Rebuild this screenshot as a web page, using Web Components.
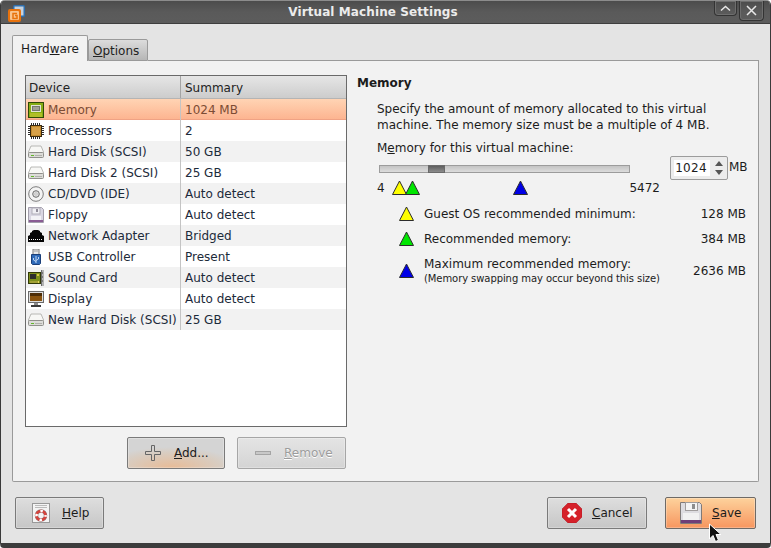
<!DOCTYPE html>
<html>
<head>
<meta charset="utf-8">
<title>Virtual Machine Settings</title>
<style>
	html, body { margin: 0; padding: 0; background: #fff; }
	body { font: 12px/16px "DejaVu Sans", sans-serif; color: #1c1c1c; overflow: hidden; }
</style>
</head>
<body>
<vm-window>
	<vm-titlebar slot="title">Virtual Machine Settings</vm-titlebar>
	<vm-tabs>
		<span slot="active">Hard<u>w</u>are</span>
		<span slot="other"><u>O</u>ptions</span>
		<div style="display:flex;gap:10px">
			<div style="width:322px;flex:none">
				<device-list>
					<device-row icon="memory" summary="1024 MB" selected>Memory</device-row>
					<device-row icon="cpu" summary="2">Processors</device-row>
					<device-row icon="disk" summary="50 GB">Hard Disk (SCSI)</device-row>
					<device-row icon="disk" summary="25 GB">Hard Disk 2 (SCSI)</device-row>
					<device-row icon="cd" summary="Auto detect">CD/DVD (IDE)</device-row>
					<device-row icon="floppy" summary="Auto detect">Floppy</device-row>
					<device-row icon="net" summary="Bridged">Network Adapter</device-row>
					<device-row icon="usb" summary="Present">USB Controller</device-row>
					<device-row icon="sound" summary="Auto detect">Sound Card</device-row>
					<device-row icon="display" summary="Auto detect">Display</device-row>
					<device-row icon="disk" summary="25 GB">New Hard Disk (SCSI)</device-row>
				</device-list>
				<div style="display:flex;justify-content:flex-end;gap:12px;margin:10px 1px 0 0">
					<vm-button kind="hover" style="width:98px;--pad:17px;--gap:13px"><vm-icon slot="icon" name="plus"></vm-icon><u>A</u>dd...</vm-button>
					<vm-button kind="disabled" style="width:109px;--pad:17px;--gap:13px"><vm-icon slot="icon" name="minus"></vm-icon><u>R</u>emove</vm-button>
				</div>
			</div>
			<memory-panel></memory-panel>
		</div>
	</vm-tabs>
	<div slot="actions" style="display:flex;align-items:center">
		<vm-button style="width:89px;--pad:16px;--gap:12px"><vm-icon slot="icon" name="help"></vm-icon><u>H</u>elp</vm-button>
		<vm-button style="width:100px;--pad:14px;--gap:10px;margin-left:auto"><vm-icon slot="icon" name="cancel"></vm-icon><u>C</u>ancel</vm-button>
		<vm-button kind="default" style="width:91px;--pad:14px;--gap:10px;margin:0 3px 0 18px"><vm-icon slot="icon" name="save"></vm-icon><u>S</u>ave</vm-button>
	</div>
	<mouse-pointer slot="overlay"></mouse-pointer>
</vm-window>

<script>
const ICONS = {
	memory: `<rect x="0" y="0" width="16" height="16" fill="#2f4a06"/><rect x="1" y="1" width="14" height="14" fill="#87ad14"/><rect x="3" y="3" width="10" height="7" fill="#e4e4d8"/><rect x="4" y="4" width="8" height="5" fill="#77776e"/><rect x="5" y="5" width="6" height="3" fill="#a2a296"/><path d="M2 11h12v4H2z" fill="#d9cf3a"/><path d="M3 11v4M5 11v4M7 11v4M9 11v4M11 11v4M13 11v4" stroke="#87ad14"/>`,
	cpu: `<path d="M0 3.500h16M0 5.500h16M0 7.500h16M0 9.500h16M0 11.500h16M3.500 0v16M5.500 0v16M7.500 0v16M9.500 0v16M11.500 0v16" stroke="#2c2c2c"/><rect x="2" y="2" width="12" height="12" fill="#3a2a10"/><rect x="3" y="3" width="10" height="10" fill="#c28a2e"/><rect x="4" y="4" width="8" height="8" fill="#d8a148"/>`,
	disk: `<path d="M3 2h10l3 7H0z" fill="#f7f7f5" stroke="#a8a8a4" stroke-width=".8"/><rect x=".5" y="8.500" width="15" height="5" rx="1" fill="#dcdcd8" stroke="#90908c"/><rect x="3" y="11" width="3" height="1" fill="#62b82a"/><rect x="7" y="11" width="7" height="1" fill="#b0b0ac"/>`,
	cd: `<circle cx="8" cy="8" r="7.300" fill="#f4f4f4" stroke="#7c7c7c"/><circle cx="8" cy="8" r="3.300" fill="#e2e2e2" stroke="#6c6c6c"/><circle cx="8" cy="8" r="1.200" fill="#fff" stroke="#999" stroke-width=".6"/>`,
	floppy: `<path d="M.5 .5h13l2 2v13H.5z" fill="#d9d6e2" stroke="#a39fac"/><rect x="4" y="1" width="8" height="6" fill="#f0eff4" stroke="#b0adb8"/><rect x="8" y="2" width="2" height="3" fill="#918d9a"/><rect x="3" y="9" width="10" height="4" fill="#f3f2f6"/><rect x="1" y="13" width="14" height="2" fill="#8a5c94"/>`,
	net: `<path d="M0 14V8l2-1V5l2-1V3l2-1h4l2 1v1l2 1v2l2 1v6z" fill="#050505"/><path d="M1 11.500h14" stroke="#fff" stroke-dasharray="1 1"/>`,
	usb: `<rect x="5" y="0" width="6" height="6" fill="#e8e8e8" stroke="#7c7c7c"/><path d="M6.500 2h1M8.500 2h1" stroke="#555"/><path d="M3.500 5.500h9v9l-1 1h-7l-1-1z" fill="#2f6ab8" stroke="#1b3f78"/><path d="M8 7v7M5.500 9v2l2.500 1.500M10.500 8v2l-2.500 1.500" stroke="#bcd4f2" fill="none"/>`,
	sound: `<rect x="0" y="2" width="13" height="12" fill="#333a08"/><rect x="1" y="3" width="11" height="10" fill="#7d8f1c"/><rect x="2" y="4" width="6" height="5" fill="#2c2c2c"/><rect x="9" y="4" width="2" height="2" fill="#d9c64a"/><path d="M2 11h9v2H2z" fill="#e6d65a"/><path d="M3 11v2M5 11v2M7 11v2M9 11v2" stroke="#5e6c10"/><rect x="13" y="0" width="3" height="16" fill="#b4b4b4"/><path d="M14 3h1M14 7h1M14 11h1" stroke="#3c3c3c"/><path d="M13.500 0v16" stroke="#6c6c6c"/>`,
	display: `<rect x=".5" y=".5" width="15" height="11" fill="#dedede" stroke="#6a6a6a"/><rect x="2" y="2" width="12" height="8" fill="#8a5410"/><rect x="2" y="2" width="12" height="3" fill="#4e2e08"/><rect x="6" y="12" width="4" height="2" fill="#8c8c8c"/><rect x="3" y="14" width="10" height="2" fill="#3c3c3c"/>`,
	plus: `<path d="M6.500 .5h3v6h6v3h-6v6h-3v-6h-6v-3h6z" fill="none" stroke="#666"/>`,
	minus: `<rect x=".5" y="6.500" width="15" height="3" fill="#c8c8c8" stroke="#777" stroke-dasharray="1 1"/>`
};
const WIDE_ICONS = {
	help: `<svg viewBox="0 0 18 20" width="18" height="20"><rect x=".5" y=".5" width="17" height="19" fill="#f4f4f4" stroke="#999"/><path d="M3 2.500h12M3 4.500h12" stroke="#bbb"/><circle cx="9" cy="12.500" r="4.500" fill="none" stroke="#8c6f6f" stroke-width="3.400"/><circle cx="9" cy="12.500" r="4.500" fill="none" stroke="#d8433c" stroke-width="2.600"/><circle cx="9" cy="12.500" r="4.500" fill="none" stroke="#fff" stroke-width="2.600" stroke-dasharray="2.500 4.570" stroke-dashoffset="1.200"/></svg>`,
	cancel: `<svg viewBox="0 0 20 20" width="20" height="20"><path d="M6 0h8l6 6v8l-6 6H6l-6-6V6z" fill="#d5212a" stroke="#a31820" stroke-width=".5"/><path d="M6 6l8 8M14 6l-8 8" stroke="#fff" stroke-width="3"/></svg>`,
	save: `<svg viewBox="0 0 22 22" width="22" height="22"><path d="M.5 .5h19l2 2v19H.5z" fill="#dddce0" stroke="#807a78"/><rect x="5.500" y=".5" width="12" height="8" fill="#f4f4f4" stroke="#a09c9c"/><rect x="12" y="2" width="3" height="5" fill="#8d8d8d"/><rect x="3" y="11" width="16" height="7" fill="#f1f1f1"/><rect x="1" y="18" width="20" height="3" fill="#6f3f78"/></svg>`
};

// small icons share one 16x16 viewBox, the bigger ones carry their own
class VmIcon extends HTMLElement {
	connectedCallback() {
		const name = this.getAttribute("name");
		const svg = WIDE_ICONS[name] || `<svg viewBox="0 0 16 16" width="16" height="16">${ICONS[name]}</svg>`;
		this.attachShadow({ mode: "open" }).innerHTML = `
			<style>:host { display: block; line-height: 0; } svg { display: block; }</style>${svg}`;
	}
}

class VmWindow extends HTMLElement {
	constructor() {
		super();
		this.attachShadow({ mode: "open" }).innerHTML = `
			<style>
				:host {
					display: flex;
					flex-direction: column;
					position: relative;
					box-sizing: border-box;
					width: 771px;
					height: 548px;
					background: #e4e4e4;
					border-left: 1px solid #3a3a3a;
					border-right: 1px solid #3a3a3a;
					border-bottom: 5px solid #3c3c3c;
					border-radius: 5px 5px 4px 4px;
					overflow: hidden;
				}
				.body { padding: 11px 11px 14px 11px; }
				.actions { margin: 15px 0 0 3px; }
			</style>
			<slot name="title"></slot>
			<div class="body">
				<slot></slot>
				<div class="actions"><slot name="actions"></slot></div>
			</div>
			<slot name="overlay"></slot>
		`;
	}
}

class VmTitlebar extends HTMLElement {
	constructor() {
		super();
		this.attachShadow({ mode: "open" }).innerHTML = `
			<style>
				:host {
					display: flex;
					box-sizing: border-box;
					height: 25px;
					background: linear-gradient(#4c4c4c, #5a5a5a 50%, #5c5c5c);
					border-top: 1px solid #8c8c8c;
					border-bottom: 1px solid #3e3e3e;
					color: #ececec;
					font: bold 12px/22px "DejaVu Sans", sans-serif;
					letter-spacing: .1px;
				}
				.logo { margin: 4px 0 0 7px; width: 17px; height: 17px; }
				.name { flex: 1; text-align: center; padding-left: 7px; }
				.btn {
					box-sizing: border-box;
					border: 1px solid #333;
					border-top: 0;
					border-radius: 0 0 4px 4px;
					box-shadow: inset 0 0 0 1px #6e6e6e;
					display: flex;
					align-items: center;
					justify-content: center;
				}
				.up { width: 23px; height: 15px; }
				.close { width: 25px; height: 20px; margin: 0 6px 0 2px; }
			</style>
			<svg class="logo" viewBox="0 0 17 17">
				<rect x="5" y="0" width="12" height="12" rx="1.500" fill="#2f6fae"/>
				<rect x="6.500" y="1.500" width="9" height="9" fill="#c6d2de"/>
				<rect x="0" y="4" width="13" height="13" rx="2" fill="#e8720c"/>
				<rect x="2" y="6" width="9" height="9" rx="1" fill="#f9c48e"/>
				<path d="M9 8.500H5v5h4v-3H7" fill="none" stroke="#e8720c" stroke-width="1.500"/>
			</svg>
			<div class="name"><slot></slot></div>
			<div class="btn up"><svg width="11" height="7" viewBox="0 0 11 7"><path d="M1 5.500l4.500-4 4.500 4" fill="none" stroke="#e8e8e8" stroke-width="1.500"/></svg></div>
			<div class="btn close"><svg width="11" height="11" viewBox="0 0 11 11"><path d="M1 1l9 9M10 1l-9 9" stroke="#e8e8e8" stroke-width="1.500"/></svg></div>
		`;
	}
}

class VmTabs extends HTMLElement {
	constructor() {
		super();
		this.attachShadow({ mode: "open" }).innerHTML = `
			<style>
				:host { display: block; }
				.strip { display: flex; align-items: flex-end; height: 26px; }
				.tab { box-sizing: border-box; border: 1px solid #9a9a9a; border-radius: 2px 2px 0 0; text-align: center; }
				.on { width: 76px; height: 26px; background: #f2f2f2; border-bottom: 0; line-height: 26px; }
				.off { width: 60px; height: 22px; background: linear-gradient(#dcdcdc, #b6b6b6); line-height: 23px; color: #222; text-align: left; padding-left: 4px; }
				.rest { flex: 1; border-bottom: 1px solid #9a9a9a; }
				.panel {
					background: #f2f2f2;
					border: 1px solid #9a9a9a;
					border-top: 0;
					border-radius: 0 0 2px 2px;
					padding: 14px 12px 12px 12px;
				}
			</style>
			<div class="strip">
				<div class="tab on"><slot name="active"></slot></div>
				<div class="tab off"><slot name="other"></slot></div>
				<div class="rest"></div>
			</div>
			<div class="panel"><slot></slot></div>
		`;
	}
}

class DeviceList extends HTMLElement {
	constructor() {
		super();
		this.attachShadow({ mode: "open" }).innerHTML = `
			<style>
				:host { display: block; box-sizing: border-box; height: 352px; background: #fff; border: 1px solid #6a6a6a; }
				.head { display: flex; height: 22px; line-height: 25px; background: linear-gradient(#e6e6e6, #cccccc); border-bottom: 1px solid #b4b4b4; color: #222; }
				.head div { box-sizing: border-box; }
				.dev { width: 155px; padding-left: 3px; border-right: 1px solid #a4a4a4; }
				.sum { padding-left: 4px; }
			</style>
			<div class="head"><div class="dev">Device</div><div class="sum">Summary</div></div>
			<slot></slot>
		`;
	}
}

class DeviceRow extends HTMLElement {
	connectedCallback() {
		const icon = this.getAttribute("icon");
		const summary = this.getAttribute("summary");
		this.attachShadow({ mode: "open" }).innerHTML = `
			<style>
				:host { display: flex; height: 21px; line-height: 21px; background: #fff; color: #1c2a3a; }
				:host(:nth-child(odd)) { background: #f2f2f2; }
				:host([selected]) {
					background: linear-gradient(#ffd4b4, #fdb38f);
					color: #7c4c34;
					box-shadow: inset 0 -1px 0 #f0a284;
				}
				.dev { box-sizing: border-box; width: 155px; display: flex; align-items: center; gap: 4px; padding-left: 2px; border-right: 1px solid #c4c4c4; white-space: nowrap; }
				.label { padding-top: 2px; }
				.sum { padding: 1px 0 0 4px; }
			</style>
			<div class="dev"><vm-icon name="${icon}"></vm-icon><div class="label"><slot></slot></div></div>
			<div class="sum">${summary}</div>
		`;
	}
}

class VmButton extends HTMLElement {
	constructor() {
		super();
		this.attachShadow({ mode: "open" }).innerHTML = `
			<style>
				:host {
					display: flex;
					align-items: center;
					gap: var(--gap, 8px);
					box-sizing: border-box;
					height: 32px;
					padding-left: var(--pad, 12px);
					border: 1px solid #7a7a7a;
					border-radius: 2px;
					background: linear-gradient(#dedede, #c6c6c6);
					box-shadow: inset 0 0 0 1px rgba(255,255,255,.25);
					color: #1c1c1c;
				}
				:host([kind="hover"]) { background: radial-gradient(ellipse 70% 70% at 45% 100%, #e8bb96, #d8cdc2 75%, #d4d4d4); }
				:host([kind="disabled"]) {
					background: linear-gradient(#e4e4e4, #d4d4d4);
					border-color: #a6a6a6;
					color: #9c9c9c;
					text-shadow: 0 1px 0 #fff;
				}
				:host([kind="default"]) { background: linear-gradient(#fdd29c, #f7965f); border-color: #6e6a66; }
			</style>
			<slot name="icon"></slot>
			<span><slot></slot></span>
		`;
	}
}

class MemoryPanel extends HTMLElement {
	constructor() {
		super();
		const tri = (fill, ml = 0) => `<svg style="margin-left:${ml}px;display:block;flex:none" width="15" height="15" viewBox="0 0 15 15"><path d="M7.500 1L14.500 14.500H.5z" fill="${fill}" stroke="#2c2c2c"/></svg>`;
		this.attachShadow({ mode: "open" }).innerHTML = `
			<style>
				:host { display: block; flex: 1; }
				h3 { margin: 0 0 10px; font-size: 12px; line-height: 16px; font-weight: bold; }
				.body { margin-left: 20px; }
				p { margin: 0 0 7px; }
				.slide { display: flex; height: 23px; margin: 0; }
				.track {
					box-sizing: border-box;
					width: 251px;
					height: 8px;
					margin: 9px 0 0 2px;
					border: 1px solid #9c9c9c;
					background: linear-gradient(#c4c4c4, #dcdcdc);
				}
				.thumb { box-sizing: border-box; width: 17px; height: 8px; margin: -1px 0 0 48px; background: linear-gradient(#5e5e5e, #8c8c8c); border: 1px solid #6a6a6a; }
				.spin {
					box-sizing: border-box;
					display: flex;
					width: 58px;
					height: 24px;
					margin-left: 40px;
					border: 1px solid #9c9c9c;
					border-radius: 2px;
					background: #ececec;
				}
				.entry { width: 36px; margin: 3px 0 3px 3px; background: #fff; text-align: center; line-height: 16px; letter-spacing: .3px; padding-right: 2px; box-sizing: border-box; }
				.arrows { flex: 1; display: flex; flex-direction: column; align-items: center; justify-content: center; gap: 4px; }
				.arrows i { width: 0; height: 0; border: 4px solid transparent; }
				.arrows i:first-child { border-top: 0; border-bottom: 5px solid #555; }
				.arrows i:last-child { border-bottom: 0; border-top: 5px solid #555; }
				.unit { margin-left: 1px; line-height: 22px; }
				.scale { display: flex; align-items: center; width: 283px; height: 17px; margin: 0 0 10px; }
				.scale span:last-child { margin-left: auto; }
				.legend { display: grid; grid-template-columns: 18px 1fr auto; column-gap: 9px; row-gap: 9px; align-items: center; margin-left: 20px; width: 349px; }
				.legend svg { justify-self: center; margin-top: -1px; }
				.legend div { white-space: nowrap; }
				small { display: block; font-size: 10px; line-height: 14px; letter-spacing: -.08px; }
				.val { text-align: right; }
			</style>
			<h3>Memory</h3>
			<div class="body">
				<p>Specify the amount of memory allocated to this virtual<br>machine. The memory size must be a multiple of 4 MB.</p>
				<p style="margin-bottom:0">M<u>e</u>mory for this virtual machine:</p>
				<div class="slide">
					<div class="track"><div class="thumb"></div></div>
					<div class="spin"><div class="entry">1024</div><div class="arrows"><i></i><i></i></div></div>
					<div class="unit">MB</div>
				</div>
				<div class="scale"><span>4</span>${tri("#ffff00", 7)}${tri("#00e600", -2)}${tri("#0000e6", 93)}<span>5472</span></div>
				<div class="legend">
					${tri("#ffff00")}<div>Guest OS recommended minimum:</div><div class="val">128 MB</div>
					${tri("#00e600")}<div>Recommended memory:</div><div class="val">384 MB</div>
					${tri("#0000e6")}<div>Maximum recommended memory:<small>(Memory swapping may occur beyond this size)</small></div><div class="val">2636 MB</div>
				</div>
			</div>
		`;
	}
}

class MousePointer extends HTMLElement {
	constructor() {
		super();
		this.attachShadow({ mode: "open" }).innerHTML = `
			<style>:host { position: absolute; left: 707px; top: 523px; line-height: 0; }</style>
			<svg width="15" height="20" viewBox="0 0 15 20"><path d="M1.500 1v15l3.500-3.500 2.500 6 3-1.200-2.500-5.800h5z" fill="#111" stroke="#fff"/></svg>
		`;
	}
}

customElements.define("vm-icon", VmIcon);
customElements.define("vm-window", VmWindow);
customElements.define("vm-titlebar", VmTitlebar);
customElements.define("device-list", DeviceList);
customElements.define("device-row", DeviceRow);
customElements.define("vm-tabs", VmTabs);
customElements.define("vm-button", VmButton);
customElements.define("memory-panel", MemoryPanel);
customElements.define("mouse-pointer", MousePointer);
</script>
</body>
</html>
